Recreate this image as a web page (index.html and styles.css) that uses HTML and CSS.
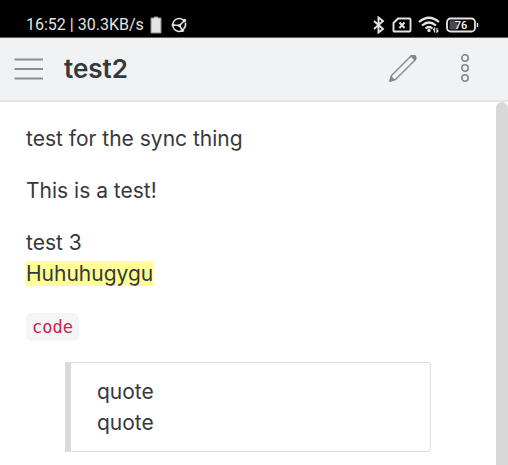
FILE: index.html
```html
<!DOCTYPE html>
<html lang="en">
<head>
    <meta charset="UTF-8">
    <meta name="viewport" content="width=device-width, initial-scale=1.0">
    <title>test2</title>
    <link rel="stylesheet" href="styles.css">
</head>
<body>
    <div class="status-bar">
        <div class="status-left">
            <span>16:52 | 30.3KB/s</span>
            <svg class="battery-small" width="12" height="18" viewBox="0 0 12 18">
                <path d="M4 1h4v1h3v15H1V2h3z" fill="#e4e4e4" stroke="#8d8d8d"/>
            </svg>
            <svg class="sync-icon" width="16" height="16" viewBox="0 0 16 16" fill="none" stroke="#e4e4e4" stroke-width="1.5">
                <path d="M13 3.500A6.500 6.500 0 1 0 11.500 13.500M14.500 5.500q.6 4-2 6.500"/>
                <path d="M8.500 8.500 14 3M8.500 8.500 1.500 8M8.500 8.500l3 5"/>
                <g fill="#e4e4e4" stroke="none">
                    <circle cx="8.500" cy="8.500" r="1.500"/>
                    <circle cx="13.500" cy="3.500" r="1.700"/>
                    <circle cx="2" cy="8" r="1.500"/>
                    <circle cx="11.500" cy="13.200" r="1.700"/>
                </g>
            </svg>
        </div>
        <div class="status-right">
            <svg width="14" height="18" viewBox="0 0 14 18" fill="none" stroke="#e4e4e4" stroke-width="1.900">
                <path d="M2 5l9 8-4.500 3.500v-15L11 5l-9 8"/>
            </svg>
            <svg width="20" height="16" viewBox="0 0 20 16" fill="none" stroke="#e4e4e4" stroke-width="1.900" stroke-linejoin="round">
                <path d="M6 1.500h11.500q1 0 1 1v11q0 1-1 1h-15q-1 0-1-1V6z"/>
                <path d="M7.500 5.500l5 5.500M12.500 5.500l-5 5.500" stroke-width="2"/>
            </svg>
            <svg width="22" height="17" viewBox="0 0 22 17" fill="none" stroke="#e4e4e4" stroke-width="2.200">
                <path d="M1 6q10-8.500 20 0M4 9.500q7-6 14 0M7.500 12.500q3.500-3 7 0"/>
                <circle cx="11" cy="14.500" r="1.700" fill="#e4e4e4" stroke="none"/>
                <path d="M16.500 16.500v-4l-1.300 1.500M19 12v4l1.300-1.500" stroke-width="1.300"/>
            </svg>
            <svg width="33" height="16" viewBox="0 0 33 16">
                <rect x="3.500" y="3.500" width="8" height="9" rx="1" fill="#4a4a4a"/>
                <rect x="1" y="1.500" width="28" height="13" rx="3.500" fill="none" stroke="#e4e4e4" stroke-width="1.800"/>
                <path d="M31.500 6v4" stroke="#e4e4e4" stroke-width="1.500"/>
                <text class="battery-level" x="15" y="12" text-anchor="middle">76</text>
            </svg>
        </div>
    </div>

    <header class="toolbar">
        <button type="button" class="icon-button" aria-label="Menu">
            <svg width="30" height="24" viewBox="0 0 30 24" stroke="#8b8d8f" stroke-width="1.800">
                <path d="M.5 2.500h28.500M.5 12h28.500M.5 21.500h28.500"/>
            </svg>
        </button>
        <h1>test2</h1>
        <button type="button" class="icon-button" aria-label="Edit">
            <svg width="28" height="28" viewBox="0 0 28 28" fill="none" stroke="#84878a" stroke-width="1.400" stroke-linejoin="round">
                <path d="M1 26l1.500-5.500L22 1q2-1.500 4 0 1.500 2 0 4L6.500 24.500z"/>
                <path d="M1 26l1.200-4 2.800 2.800zM22 1q2-1.500 4 0 1.500 2 0 4z" fill="#84878a"/>
            </svg>
        </button>
        <button type="button" class="icon-button more" aria-label="More">
            <svg width="10" height="30" viewBox="0 0 10 30" fill="none" stroke="#84878a" stroke-width="1.600">
                <circle cx="5" cy="4" r="3.200"/>
                <circle cx="5" cy="14" r="3.200"/>
                <circle cx="5" cy="24" r="3.200"/>
            </svg>
        </button>
    </header>

    <div class="page">
        <main class="note">
            <p>test for the sync thing</p>
            <p>This is a test!</p>
            <p>test 3<br><mark>Huhuhugygu</mark></p>
            <p><code>code</code></p>
            <blockquote>quote<br>quote</blockquote>
        </main>
        <div class="scrollbar"></div>
    </div>
</body>
</html>
```

FILE: styles.css
```css
body {
    display: flex;
    flex-direction: column;
    height: 100vh;
    margin: 0;
    background: #fff;
    color: #36393c;
    font-family: Inter, "Liberation Sans", sans-serif;
    overflow: hidden;
}
.status-bar {
    display: flex;
    justify-content: space-between;
    padding: 12px 29px 0 26px;
    height: 25px;
    flex-shrink: 0;
    background: #000;
    border-bottom: 1px solid #606060;
    color: #e4e4e4;
    font: 400 16px/25px Roboto, sans-serif;
}
.status-left,
.status-right {
    display: flex;
    align-items: center;
}
.battery-small {
    margin: 0 9px 0 6px;
}
.status-right {
    gap: 6px;
}
.battery-level {
    fill: #fff;
    font: 500 11px Roboto, sans-serif;
}
.toolbar {
    display: flex;
    align-items: center;
    flex-shrink: 0;
    height: 62px;
    padding: 0 38px 0 14px;
    background: #f1f2f4;
    border-bottom: 2px solid #e3e4e5;
}
.toolbar h1 {
    flex: 1;
    margin: 0 0 0 20px;
    font-size: 26px;
    font-weight: 600;
    line-height: 32px;
}
.icon-button {
    display: flex;
    padding: 0;
    border: none;
    background: none;
    cursor: pointer;
}
.more {
    margin-left: 43px;
}
.page {
    display: flex;
    flex: 1;
    min-height: 0;
}
.note {
    flex: 1;
    padding: 21px 26px;
    font-size: 21px;
    line-height: 31px;
}
.note p {
    margin: 0 0 21px;
}
mark {
    background: #ffff95;
    color: inherit;
}
code {
    padding: 4px 6px;
    border-radius: 5px;
    background: #f4f5f7;
    color: #c7254e;
    font-family: "DejaVu Sans Mono", monospace;
    font-size: 17px;
    line-height: 20px;
}
blockquote {
    margin: 0 39px;
    padding: 13px 26px;
    border: 1px solid #dedede;
    border-left: 6px solid #dadada;
    border-radius: 0 4px 4px 0;
}
.scrollbar {
    width: 12px;
    border-radius: 6px 6px 0 0;
    background: #d8d8d8;
}
```
